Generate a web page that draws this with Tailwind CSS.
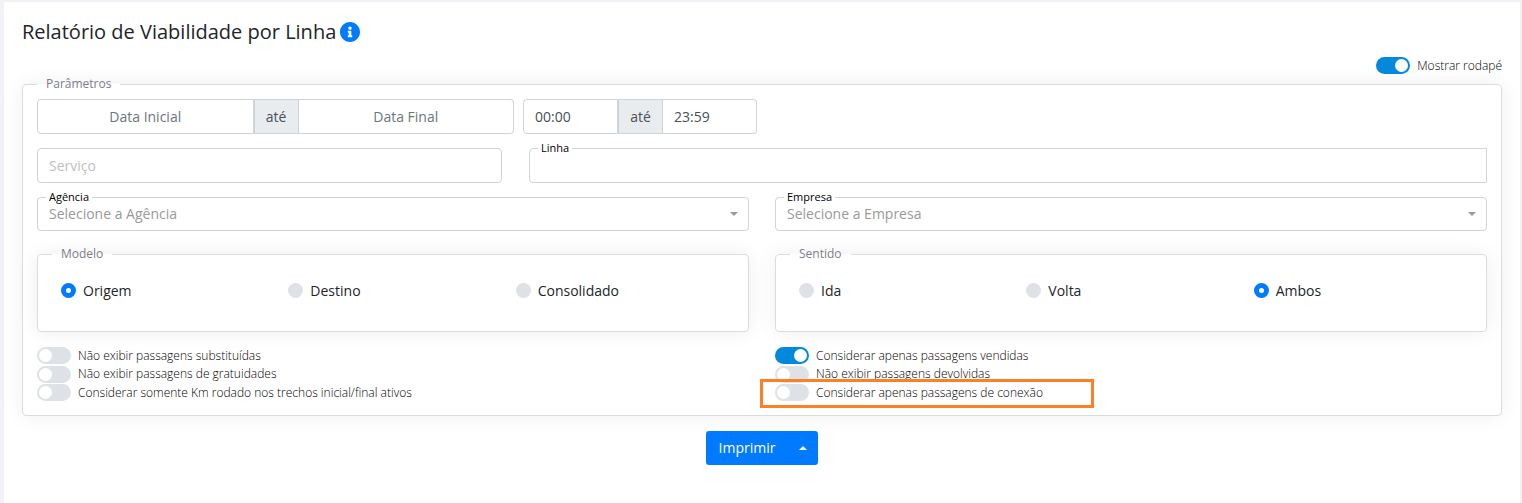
<!DOCTYPE html>
<html lang="pt-BR">
<head>
  <meta charset="UTF-8" />
  <meta name="viewport" content="width=device-width, initial-scale=1.0" />
  <title>Relatório de Viabilidade por Linha</title>
  <script src="https://cdn.jsdelivr.net/npm/@tailwindcss/browser@4"></script>
</head>
<body class="min-h-screen flex flex-col bg-[#f1f1f8] pt-0.5 pl-1 pr-0.5 font-['Open_Sans',sans-serif] text-sm text-[#212529]">
  <main class="grow bg-white px-[18px] pt-[15px] pb-6">
    <h1 class="flex items-center gap-1 h-[30px] text-xl">
      Relatório de Viabilidade por Linha
      <svg class="size-5" viewBox="8 8 496 496" fill="#007bff" aria-hidden="true"><path d="M256 8C119.043 8 8 119.083 8 256c0 136.997 111.043 248 248 248s248-111.003 248-248C504 119.083 392.957 8 256 8zm0 110c23.196 0 42 18.804 42 42s-18.804 42-42 42-42-18.804-42-42 18.804-42 42-42zm56 254c0 6.627-5.373 12-12 12h-88c-6.627 0-12-5.373-12-12v-24c0-6.627 5.373-12 12-12h12v-64h-12c-6.627 0-12-5.373-12-12v-24c0-6.627 5.373-12 12-12h64c6.627 0 12 5.373 12 12v100h12c6.627 0 12 5.373 12 12v24z"/></svg>
    </h1>

    <div class="flex justify-end mt-2.5">
      <label class="flex items-center gap-[7px] h-[17px] text-xs font-light text-black">
        <input type="checkbox" checked class="appearance-none w-[34px] h-[17px] rounded-full bg-[#dee2e6] checked:bg-[#0288dd] before:block before:size-[13px] before:m-0.5 before:rounded-full before:bg-white checked:before:ml-[19px]" />
        Mostrar rodapé
      </label>
    </div>

    <form>
      <fieldset class="border border-[#dcdcdc] rounded bg-white px-3.5 pb-3.5 shadow-[0_0_20px_rgba(0,0,0,0.07)]">
        <legend class="px-[9px] h-5 leading-5 text-xs text-[#7e7e8a]">Parâmetros</legend>

        <!-- Período -->
        <div class="flex flex-wrap gap-[9px] mt-[5px] text-[#495057]">
          <div class="flex w-[477px] h-[35px]">
            <input type="text" placeholder="Data Inicial" aria-label="Data Inicial" class="flex-1 min-w-0 border border-[#ced4da] rounded-l text-center placeholder:text-[#6c757d]" />
            <span class="flex items-center justify-center w-[45px] border border-[#ced4da] bg-[#e9ecef]">até</span>
            <input type="text" placeholder="Data Final" aria-label="Data Final" class="flex-1 min-w-0 border border-l-0 border-[#ced4da] rounded-r text-center placeholder:text-[#6c757d]" />
          </div>
          <div class="flex w-[234px] h-[35px]">
            <input type="text" value="00:00" aria-label="Hora inicial" class="flex-1 min-w-0 px-[11px] border border-[#ced4da] rounded-l" />
            <span class="flex items-center justify-center w-[45px] border border-[#ced4da] bg-[#e9ecef]">até</span>
            <input type="text" value="23:59" aria-label="Hora final" class="flex-1 min-w-0 px-[11px] border border-l-0 border-[#ced4da] rounded-r" />
          </div>
        </div>

        <div class="grid grid-cols-[465fr_958fr] gap-[27px] mt-3.5">
          <input type="text" placeholder="Serviço" aria-label="Serviço" class="w-full h-[35px] px-[11px] border border-[#ced4da] rounded placeholder:text-[#c0c0c0]" />
          <div class="relative">
            <label for="linha" class="absolute left-[9px] -top-2 px-[3px] leading-4 text-[11px] text-black bg-white">Linha</label>
            <input type="text" id="linha" class="w-full h-[35px] px-[11px] border border-[#ced4da] rounded-l" />
          </div>
        </div>

        <div class="grid grid-cols-2 gap-[26px] mt-3.5">
          <div class="relative">
            <label for="agencia" class="absolute left-[9px] -top-2 px-[3px] leading-4 text-[11px] text-black bg-white">Agência</label>
            <select id="agencia" class="block appearance-none w-full h-[34px] px-[11px] border border-[#ced4da] rounded text-[#999]">
              <option>Selecione a Agência</option>
            </select>
            <svg class="absolute right-[11px] top-[15px] w-2 h-1 pointer-events-none" viewBox="0 0 8 4" fill="#999"><path d="M0 0h8L4 4z"/></svg>
          </div>
          <div class="relative">
            <label for="empresa" class="absolute left-[9px] -top-2 px-[3px] leading-4 text-[11px] text-black bg-white">Empresa</label>
            <select id="empresa" class="block appearance-none w-full h-[34px] px-[11px] border border-[#ced4da] rounded text-[#999]">
              <option>Selecione a Empresa</option>
            </select>
            <svg class="absolute right-[11px] top-[15px] w-2 h-1 pointer-events-none" viewBox="0 0 8 4" fill="#999"><path d="M0 0h8L4 4z"/></svg>
          </div>
        </div>

        <!-- Modelo / Sentido -->
        <div class="grid grid-cols-2 gap-[26px] mt-[13px]">
          <fieldset class="min-w-0 border border-[#dcdcdc] rounded bg-white pl-[23px] pr-[5px] pb-[30px] shadow-[0_0_20px_rgba(0,0,0,0.07)]">
            <legend class="-ml-[9px] px-[9px] h-5 leading-5 text-xs text-[#7e7e8a]">Modelo</legend>
            <div class="grid grid-cols-3 mt-4">
              <label class="flex items-center gap-[7px] h-[21px]">
                <input type="radio" name="modelo" checked class="appearance-none size-[15px] rounded-full bg-[#dee2e6] checked:border-5 checked:border-[#007bff] checked:bg-white" />
                Origem
              </label>
              <label class="flex items-center gap-[7px] h-[21px]">
                <input type="radio" name="modelo" class="appearance-none size-[15px] rounded-full bg-[#dee2e6] checked:border-5 checked:border-[#007bff] checked:bg-white" />
                Destino
              </label>
              <label class="flex items-center gap-[7px] h-[21px]">
                <input type="radio" name="modelo" class="appearance-none size-[15px] rounded-full bg-[#dee2e6] checked:border-5 checked:border-[#007bff] checked:bg-white" />
                Consolidado
              </label>
            </div>
          </fieldset>
          <fieldset class="min-w-0 border border-[#dcdcdc] rounded bg-white pl-[23px] pr-[5px] pb-[30px] shadow-[0_0_20px_rgba(0,0,0,0.07)]">
            <legend class="-ml-[9px] px-[9px] h-5 leading-5 text-xs text-[#7e7e8a]">Sentido</legend>
            <div class="grid grid-cols-3 mt-4">
              <label class="flex items-center gap-[7px] h-[21px]">
                <input type="radio" name="sentido" class="appearance-none size-[15px] rounded-full bg-[#dee2e6] checked:border-5 checked:border-[#007bff] checked:bg-white" />
                Ida
              </label>
              <label class="flex items-center gap-[7px] h-[21px]">
                <input type="radio" name="sentido" class="appearance-none size-[15px] rounded-full bg-[#dee2e6] checked:border-5 checked:border-[#007bff] checked:bg-white" />
                Volta
              </label>
              <label class="flex items-center gap-[7px] h-[21px]">
                <input type="radio" name="sentido" checked class="appearance-none size-[15px] rounded-full bg-[#dee2e6] checked:border-5 checked:border-[#007bff] checked:bg-white" />
                Ambos
              </label>
            </div>
          </fieldset>
        </div>

        <!-- Opções -->
        <div class="grid grid-cols-2 gap-[26px] mt-[15px] text-xs font-light text-black">
          <div class="flex flex-col justify-between h-[54px]">
            <label class="flex items-center gap-[7px] h-[17px]">
              <input type="checkbox" class="appearance-none w-[34px] h-[17px] rounded-full bg-[#dee2e6] checked:bg-[#0288dd] before:block before:size-[13px] before:m-0.5 before:rounded-full before:bg-white checked:before:ml-[19px]" />
              Não exibir passagens substituídas
            </label>
            <label class="flex items-center gap-[7px] h-[17px]">
              <input type="checkbox" class="appearance-none w-[34px] h-[17px] rounded-full bg-[#dee2e6] checked:bg-[#0288dd] before:block before:size-[13px] before:m-0.5 before:rounded-full before:bg-white checked:before:ml-[19px]" />
              Não exibir passagens de gratuidades
            </label>
            <label class="flex items-center gap-[7px] h-[17px]">
              <input type="checkbox" class="appearance-none w-[34px] h-[17px] rounded-full bg-[#dee2e6] checked:bg-[#0288dd] before:block before:size-[13px] before:m-0.5 before:rounded-full before:bg-white checked:before:ml-[19px]" />
              Considerar somente Km rodado nos trechos inicial/final ativos
            </label>
          </div>
          <div class="flex flex-col justify-between h-[54px]">
            <label class="flex items-center gap-[7px] h-[17px]">
              <input type="checkbox" checked class="appearance-none w-[34px] h-[17px] rounded-full bg-[#dee2e6] checked:bg-[#0288dd] before:block before:size-[13px] before:m-0.5 before:rounded-full before:bg-white checked:before:ml-[19px]" />
              Considerar apenas passagens vendidas
            </label>
            <label class="flex items-center gap-[7px] h-[17px]">
              <input type="checkbox" class="appearance-none w-[34px] h-[17px] rounded-full bg-[#dee2e6] checked:bg-[#0288dd] before:block before:size-[13px] before:m-0.5 before:rounded-full before:bg-white checked:before:ml-[19px]" />
              Não exibir passagens devolvidas
            </label>
            <div class="relative">
              <label class="flex items-center gap-[7px] h-[17px]">
                <input type="checkbox" class="appearance-none w-[34px] h-[17px] rounded-full bg-[#dee2e6] checked:bg-[#0288dd] before:block before:size-[13px] before:m-0.5 before:rounded-full before:bg-white checked:before:ml-[19px]" />
                Considerar apenas passagens de conexão
              </label>
              <!-- destaque da opção nova -->
              <div class="absolute -left-[15px] -top-[5px] w-[334px] h-[29px] border-3 border-[#ff7f27] pointer-events-none"></div>
            </div>
          </div>
        </div>
      </fieldset>

      <div class="flex justify-center mt-[15px] text-white">
        <button type="button" class="w-[82px] h-[34px] rounded-l-[3px] bg-[#007bff]">Imprimir</button>
        <button type="button" aria-label="Mais opções" class="flex items-center justify-center w-[30px] h-[34px] rounded-r-[3px] bg-[#007bff]">
          <svg class="w-2 h-1" viewBox="0 0 8 4" fill="currentColor"><path d="M0 4h8L4 0z"/></svg>
        </button>
      </div>
    </form>
  </main>
</body>
</html>
